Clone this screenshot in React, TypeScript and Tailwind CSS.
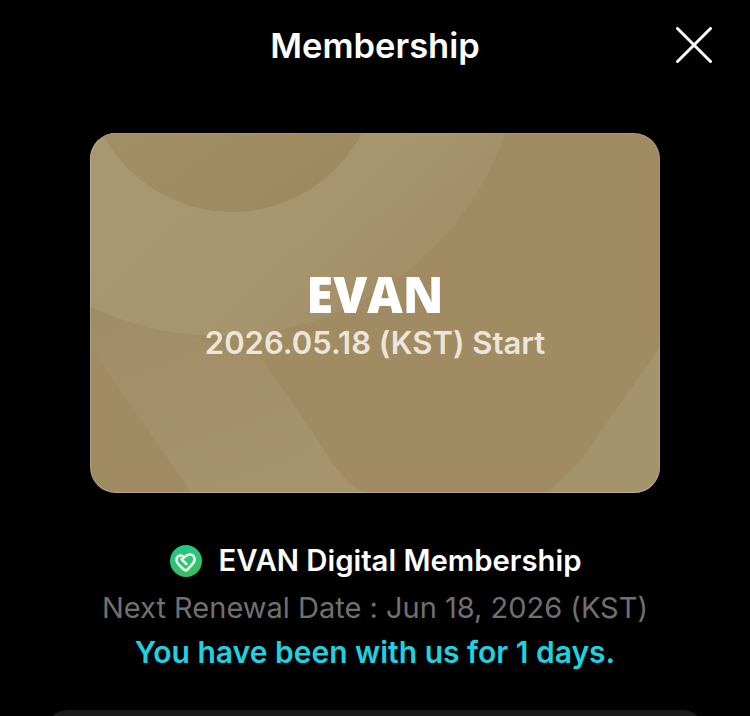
import React from "react"

function CardArt() {
  return (
    <svg className="absolute inset-0 h-full w-full" viewBox="0 0 570 360" aria-hidden="true">
      <defs>
        <linearGradient id="bandFill" x1="0" y1="0" x2="0.5" y2="1">
          <stop offset="0" stopColor="#a08c64" />
          <stop offset="1" stopColor="#a6946d" />
        </linearGradient>
        <linearGradient id="bigFill" gradientUnits="userSpaceOnUse" x1="80" y1="30" x2="250" y2="210">
          <stop offset="0" stopColor="#a9976f" />
          <stop offset="0.7" stopColor="#a6946c" />
          <stop offset="1" stopColor="#a48f67" />
        </linearGradient>
        <linearGradient id="topFill" x1="0" y1="0" x2="0.7" y2="1">
          <stop offset="0" stopColor="#a5926a" />
          <stop offset="1" stopColor="#9f8a60" />
        </linearGradient>
      </defs>
      <path d="M0 214 L102 360 L275 360 C252 350 240 327 223 300 L173 227 L0 170 Z" fill="url(#bandFill)" />
      <path d="M570 214 L493 324 C480 340 468 350 457 360 L570 360 Z" fill="#a5936c" />
      <circle cx="130" cy="-99" r="302" fill="url(#bigFill)" />
      <circle cx="142" cy="-67.5" r="146.5" fill="url(#topFill)" />
    </svg>
  )
}

function EvanBadge() {
  return (
    <svg width="34" height="34" viewBox="0 0 34 34" aria-hidden="true">
      <defs>
        <linearGradient id="badgeFill" x1="0" y1="0" x2="0.4" y2="1">
          <stop offset="0" stopColor="#1cc98c" />
          <stop offset="1" stopColor="#3bbd62" />
        </linearGradient>
      </defs>
      <circle cx="17" cy="17" r="16" fill="url(#badgeFill)" />
      <path
        d="M15.5 13.5 C13.5 10.5 8 10.8 7.5 15.5 C7.2 18 9 20 11 22 L15.5 26 C16.5 26.7 17.5 26.5 18.5 25.5 L24 19.5 C27 16 25.5 10.5 21 10.5 C18 10.5 15.5 13 12.5 15.5 L17.5 20"
        fill="none"
        stroke="#e8f9ec"
        strokeWidth="2.6"
        strokeLinecap="round"
        strokeLinejoin="round"
      />
    </svg>
  )
}

export default function App() {
  return (
    <div className="flex h-[716px] w-[750px] flex-col overflow-hidden bg-black font-['Inter',sans-serif] text-white [font-feature-settings:'calt'_0]">
      <header className="relative flex h-[92px] shrink-0 items-center justify-center">
        <h1 className="text-[34.5px] leading-none font-semibold">Membership</h1>
        <svg
          className="absolute top-[27px] right-[38px]"
          width="36"
          height="36"
          viewBox="0 0 36 36"
          aria-hidden="true"
        >
          <path d="M1.5 1.5 L34.5 34.5 M34.5 1.5 L1.5 34.5" stroke="#fff" strokeWidth="3" strokeLinecap="round" />
        </svg>
      </header>

      <div className="mt-[41px] flex shrink-0 justify-center">
        <div className="relative flex h-[360px] w-[570px] flex-col items-center overflow-hidden rounded-[26px] bg-[#a08b62] pt-[136px]">
          <CardArt />
          <div className="pointer-events-none absolute inset-0 rounded-[26px] border-[1.5px] border-white/10 border-b-white/25 border-l-white/20" />
          <p className="relative font-['Open_Sans',sans-serif] text-[49px] leading-[50px] font-extrabold">EVAN</p>
          <p className="relative mt-[6px] text-[31px] leading-[36px] font-semibold text-[#ebe5da]">
            2026.05.18 (KST) Start
          </p>
        </div>
      </div>

      <div className="mt-[48px] flex shrink-0 items-center justify-center gap-[16px]">
        <EvanBadge />
        <span className="text-[29.3px] leading-[40px] font-semibold">EVAN Digital Membership</span>
      </div>
      <p className="mt-[7px] shrink-0 text-center text-[29px] leading-[40px] text-[#707070]">
        Next Renewal Date : Jun 18, 2026 (KST)
      </p>
      <p className="mt-[4px] shrink-0 text-center text-[30px] leading-[40px] font-semibold text-[#1fd1e1]">
        You have been with us for 1 days.
      </p>

      <div className="mx-[47px] mt-[38px] h-[40px] shrink-0 rounded-t-[20px] bg-[#1a1a1a]" />
    </div>
  )
}
